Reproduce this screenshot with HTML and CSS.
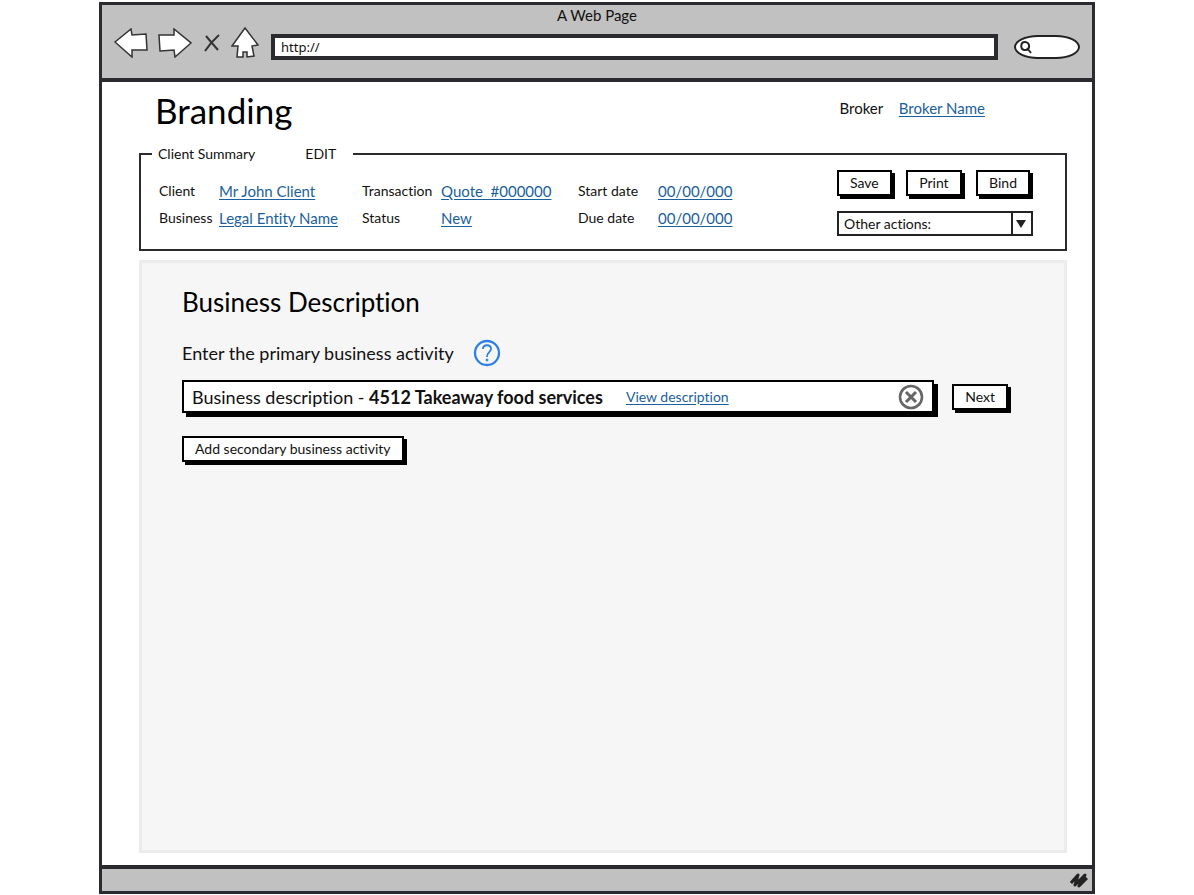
FILE: index.html
```html
<!DOCTYPE html>
<html lang="en">
<head>
    <meta charset="UTF-8">
    <meta name="viewport" content="width=device-width, initial-scale=1.0">
    <title>A Web Page</title>
    <link rel="stylesheet" href="styles.css">
</head>
<body>
    <div class="window">
        <header class="chrome">
            <div class="chrome-title">A Web Page</div>
            <div class="toolbar">
                <button type="button" class="icon-button back" aria-label="Back">
                    <svg width="34" height="30" viewBox="0 0 34 30"><path d="M1 14 L17 1 L18 7 L32 6 L33 22 L18 22 L18 29 Z" fill="#fff" stroke="#333" stroke-width="1.5"/></svg>
                </button>
                <button type="button" class="icon-button forward" aria-label="Forward">
                    <svg width="34" height="30" viewBox="0 0 34 30"><path d="M1 7 L16 7 L16 1 L33 15 L17 29 L16 22 L2 23 Z" fill="#fff" stroke="#333" stroke-width="1.5"/></svg>
                </button>
                <button type="button" class="icon-button stop" aria-label="Stop">
                    <svg width="16" height="18" viewBox="0 0 16 18"><path d="M2 2 Q7 8 14 16 M15 1 Q7 8 1 17" fill="none" stroke="#333" stroke-width="2"/></svg>
                </button>
                <button type="button" class="icon-button home" aria-label="Home">
                    <svg width="28" height="32" viewBox="0 0 28 32"><path d="M14 1 L27 18 L21 19 L23 29 L16 30 L16 25 L12 25 L12 30 L6 30 L7 19 L1 19 Z" fill="#fff" stroke="#333" stroke-width="1.5"/></svg>
                </button>
                <input type="text" class="address" value="http://" aria-label="Address">
                <div class="search">
                    <svg width="14" height="14" viewBox="0 0 14 14"><path d="M6 2 C1 2 1 10 6 10 C12 10 11 2 6 2 M8 8 L12 13" fill="none" stroke="#222" stroke-width="2"/></svg>
                    <input type="text" class="search-input" aria-label="Search">
                </div>
            </div>
        </header>

        <main class="page">
            <div class="page-header">
                <h1>Branding</h1>
                <div class="broker">Broker <a href="#">Broker Name</a></div>
            </div>

            <fieldset class="summary">
                <legend><span>Client Summary</span><span>EDIT</span></legend>
                <div class="details">
                    <span>Client</span><a href="#">Mr John Client</a>
                    <span>Transaction</span><a href="#">Quote &nbsp;#000000</a>
                    <span>Start date</span><a href="#">00/00/000</a>
                    <span>Business</span><a href="#">Legal Entity Name</a>
                    <span>Status</span><a href="#">New</a>
                    <span>Due date</span><a href="#">00/00/000</a>
                </div>
                <div class="actions">
                    <div class="action-buttons">
                        <button type="button" class="button">Save</button>
                        <button type="button" class="button">Print</button>
                        <button type="button" class="button">Bind</button>
                    </div>
                    <div class="select-box">
                        <select aria-label="Other actions">
                            <option>Other actions:</option>
                        </select>
                        <svg class="select-arrow" width="20" height="21" viewBox="0 0 20 21"><path d="M1 0 V21" stroke="#222" stroke-width="2"/><path d="M5 7 L15 7 L10 15 Z" fill="#222"/></svg>
                    </div>
                </div>
            </fieldset>

            <section class="panel">
                <h2>Business Description</h2>
                <div class="question">
                    <span>Enter the primary business activity</span>
                    <button type="button" class="icon-button" aria-label="Help">
                        <svg width="28" height="28" viewBox="0 0 28 28" fill="none" stroke="#2f7fe6"><circle cx="14" cy="14" r="12" stroke-width="2.3"/><path d="M10 10 C10 5 18 5 18 10 C18 13 14 13 14 18" stroke-width="1.8"/><circle cx="14" cy="21" r="1" fill="#2f7fe6" stroke-width="1"/></svg>
                    </button>
                </div>
                <div class="activity">
                    <div class="activity-box">
                        <span>Business description - <strong>4512 Takeaway food services</strong></span>
                        <a href="#">View description</a>
                        <button type="button" class="icon-button clear" aria-label="Clear">
                            <svg width="26" height="26" viewBox="0 0 26 26" fill="none" stroke="#666"><circle cx="13" cy="13" r="11" stroke-width="2.6"/><path d="M8 8 L18 18 M18 8 L8 18" stroke-width="3"/></svg>
                        </button>
                    </div>
                    <button type="button" class="button">Next</button>
                </div>
                <button type="button" class="button">Add secondary business activity</button>
            </section>
        </main>

        <footer class="status-bar">
            <svg width="18" height="16" viewBox="0 0 18 16"><path d="M1 11 L8 3 L5 13 L15 3 L9 14 L17 6" fill="none" stroke="#222" stroke-width="3" stroke-linejoin="round"/></svg>
        </footer>
    </div>
</body>
</html>
```
FILE: styles.css
```css
* {
    box-sizing: border-box;
}
body {
    margin: 0;
    padding: 2px 99px 1px;
    font-family: Lato, sans-serif;
    font-size: 14px;
    font-variant-ligatures: none;
    line-height: 20px;
    color: #111;
    background-color: #fff;
}
a {
    color: #1a5f9e;
    text-underline-offset: 2px;
}
button, input, select {
    font: inherit;
    color: inherit;
}
.window {
    display: flex;
    flex-direction: column;
    min-height: calc(100vh - 3px);
    border: 3px solid #2b2b2f;
}
.chrome {
    background-color: #c1c1c1;
    border-bottom: 4px solid #2b2b2f;
    padding: 0 12px 18px;
}
.chrome-title {
    font-size: 15px;
    text-align: center;
}
.toolbar {
    display: flex;
    align-items: center;
    height: 35px;
}
.icon-button {
    display: flex;
    padding: 0;
    border: none;
    background: none;
    cursor: pointer;
}
.forward {
    margin-left: 10px;
}
.stop {
    margin-left: 12px;
}
.home {
    margin: 0 12px 0 11px;
}
.address {
    flex: 1;
    min-width: 0;
    height: 26px;
    padding: 0 6px;
    font-family: "Noto Sans", sans-serif;
    font-size: 13px;
    border: 4px solid #2b2b2f;
    background-color: #fff;
    margin-top: 8px;
}
.search {
    display: flex;
    align-items: center;
    width: 66px;
    height: 24px;
    margin: 8px 0 0 16px;
    padding: 0 3px;
    border: 2px solid #222;
    border-radius: 24px / 12px;
    background-color: #fff;
}
.search-input {
    width: 40px;
    border: none;
    background: none;
}
.page {
    display: flex;
    flex-direction: column;
    flex: 1;
    padding: 0 25px 12px 37px;
}
.page-header {
    display: flex;
    justify-content: space-between;
    padding: 8px 82px 0 16px;
}
h1 {
    margin: 0;
    font-size: 35px;
    line-height: 40px;
    font-weight: 400;
    color: #000;
}
.broker {
    padding-top: 8px;
    font-size: 15px;
}
.broker a {
    margin-left: 12px;
}
.summary {
    display: flex;
    justify-content: space-between;
    margin: 14px 0 9px;
    padding: 6px 32px 13px 18px;
    border: 2px solid #2b2b2f;
}
.summary legend {
    display: flex;
    gap: 50px;
    margin-left: -7px;
    padding: 0 17px 0 6px;
}
.details {
    display: grid;
    grid-template-columns: 60px 143px 79px 137px 80px auto;
    grid-auto-rows: 27px;
    justify-items: start;
    align-items: center;
    padding-top: 7px;
}
.details a {
    font-size: 15px;
}
.actions {
    width: 196px;
}
.action-buttons {
    display: flex;
    justify-content: space-between;
    padding-right: 3px;
}
.button {
    height: 26px;
    padding: 0 11px;
    border: 2px solid #000;
    background-color: #fff;
    box-shadow: 3px 3px 0 #000;
    cursor: pointer;
}
.select-box {
    position: relative;
    margin-top: 15px;
}
.select-box select {
    display: block;
    width: 100%;
    height: 25px;
    padding: 0 5px;
    border: 2px solid #222;
    border-radius: 0;
    background-color: #fff;
    appearance: none;
}
.select-arrow {
    position: absolute;
    top: 2px;
    right: 2px;
    pointer-events: none;
}
.panel {
    flex: 1;
    padding: 23px 56px 24px 40px;
    border: 3px solid #ececec;
    background-color: #f6f6f6;
}
h2 {
    margin: 0;
    font-size: 26px;
    line-height: 32px;
    font-weight: 400;
    color: #000;
}
.question {
    display: flex;
    align-items: center;
    gap: 19px;
    margin-top: 21px;
    font-size: 18px;
}
.activity {
    display: flex;
    align-items: center;
    gap: 18px;
    margin: 13px 0 23px;
}
.activity-box {
    display: flex;
    flex: 1;
    align-items: center;
    gap: 23px;
    height: 33px;
    padding: 0 8px;
    font-size: 18px;
    border: 2px solid #000;
    background-color: #fff;
    box-shadow: 4px 4px 0 #000;
}
.activity-box a {
    font-size: 14px;
}
.clear {
    margin-left: auto;
}
.status-bar {
    display: flex;
    justify-content: flex-end;
    align-items: center;
    height: 26px;
    padding: 0 4px;
    border-top: 4px solid #2b2b2f;
    background-color: #c1c1c1;
}
```
